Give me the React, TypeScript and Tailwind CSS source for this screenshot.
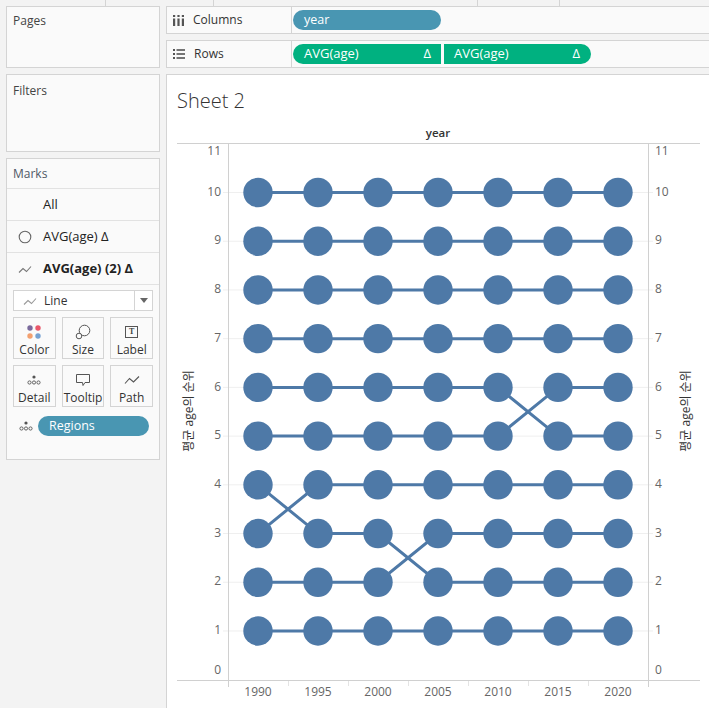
import React from "react";

const FONT = { fontFamily: '"Open Sans", "Noto Sans CJK KR", sans-serif' };

const YEARS = [1990, 1995, 2000, 2005, 2010, 2015, 2020];
const SERIES = [
  [10, 10, 10, 10, 10, 10, 10],
  [9, 9, 9, 9, 9, 9, 9],
  [8, 8, 8, 8, 8, 8, 8],
  [7, 7, 7, 7, 7, 7, 7],
  [6, 6, 6, 6, 6, 5, 5],
  [5, 5, 5, 5, 5, 6, 6],
  [3, 4, 4, 4, 4, 4, 4],
  [4, 3, 3, 2, 2, 2, 2],
  [2, 2, 2, 3, 3, 3, 3],
  [1, 1, 1, 1, 1, 1, 1],
];

const xOf = (i: number) => 258 + i * 60;
const yOf = (v: number) => 678.7 - v * 48.72;

function DetailIcon() {
  return (
    <svg width="14" height="10" viewBox="0 0 14 10">
      <circle cx="7" cy="2" r="1.6" fill="#555" />
      <circle cx="2.5" cy="7.5" r="1.6" fill="none" stroke="#555" strokeWidth="0.9" />
      <circle cx="7" cy="7.5" r="1.6" fill="none" stroke="#555" strokeWidth="0.9" />
      <circle cx="11.5" cy="7.5" r="1.6" fill="none" stroke="#555" strokeWidth="0.9" />
    </svg>
  );
}

function LineIcon({ color = "#777" }: { color?: string }) {
  return (
    <svg width="14" height="10" viewBox="0 0 14 10">
      <polyline points="1,8.5 5,4.5 8.5,7.5 13,2.5" fill="none" stroke={color} strokeWidth="1.1" />
    </svg>
  );
}

function MarkButton({ label, icon }: { label: string; icon: React.ReactNode }) {
  return (
    <div className="h-[42px] bg-[#fafafa] border border-[#d4d4d4] flex flex-col items-center">
      <div className="h-[24px] flex items-center justify-center pt-[3px]">{icon}</div>
      <div className="text-[12px] leading-[16px] text-[#333]">{label}</div>
    </div>
  );
}

function Chart() {
  const ticks = [0, 1, 2, 3, 4, 5, 6, 7, 8, 9, 10, 11];
  const labelY = (v: number) => (v === 11 ? 151 : v === 0 ? 670 : yOf(v));
  return (
    <svg width="542" height="594" viewBox="167 114 542 594" className="block" style={FONT}>
      {/* gridlines */}
      {ticks.slice(1, 11).map((v) => (
        <line key={v} x1="223" x2="653" y1={yOf(v)} y2={yOf(v)} stroke="#efefef" strokeWidth="1" />
      ))}
      <text x="438" y="136" textAnchor="middle" fontSize="11.5" fontWeight="600" fill="#333">
        year
      </text>
      <line x1="177" x2="700" y1="142.5" y2="142.5" stroke="#d0d0d0" />
      <line x1="177" x2="700" y1="679.5" y2="679.5" stroke="#d0d0d0" />
      <line x1="228.5" x2="228.5" y1="142.5" y2="686" stroke="#d0d0d0" />
      <line x1="648.5" x2="648.5" y1="142.5" y2="686" stroke="#d0d0d0" />
      {[288, 348, 408, 468, 528, 588].map((x) => (
        <line key={x} x1={x + 0.5} x2={x + 0.5} y1="680" y2="685" stroke="#e4e4e4" />
      ))}
      {ticks.map((v) => (
        <g key={v}>
          <text x="221" y={labelY(v)} textAnchor="end" dominantBaseline="middle" fontSize="12" fill="#666">
            {v}
          </text>
          <text x="655" y={labelY(v)} textAnchor="start" dominantBaseline="middle" fontSize="12" fill="#666">
            {v}
          </text>
        </g>
      ))}
      {YEARS.map((yr, i) => (
        <text key={yr} x={xOf(i)} y="692" textAnchor="middle" dominantBaseline="middle" fontSize="12" fill="#666">
          {yr}
        </text>
      ))}
      <text
        x="190"
        y="410"
        transform="rotate(-90 190 410)"
        textAnchor="middle"
        dominantBaseline="middle"
        fontSize="12"
        fill="#333"
      >
        평균 age의 순위
      </text>
      <text
        x="687"
        y="410"
        transform="rotate(-90 687 410)"
        textAnchor="middle"
        dominantBaseline="middle"
        fontSize="12"
        fill="#333"
      >
        평균 age의 순위
      </text>
      {SERIES.map((s, k) => (
        <polyline
          key={k}
          points={s.map((v, i) => `${xOf(i)},${yOf(v)}`).join(" ")}
          fill="none"
          stroke="#4e79a7"
          strokeWidth="3"
        />
      ))}
      {SERIES.map((s, k) =>
        s.map((v, i) => <circle key={`${k}-${i}`} cx={xOf(i)} cy={yOf(v)} r="14.7" fill="#4e79a7" />)
      )}
    </svg>
  );
}

export default function App() {
  return (
    <div className="w-[709px] h-[708px] bg-[#f3f3f3] flex overflow-hidden text-[#333]" style={FONT}>
      {/* Left side cards */}
      <div className="w-[166px] flex flex-col shrink-0">
        <div className="h-[6px] w-[106px] border-r border-[#d4d4d4]" />
        <div className="ml-[6px] w-[154px] h-[62px] bg-[#fafafa] border border-[#d4d4d4] px-[6px] pt-[5px] text-[12px] text-[#444]">
          Pages
        </div>
        <div className="ml-[6px] mt-[6px] w-[154px] h-[78px] bg-[#fafafa] border border-[#d4d4d4] px-[6px] pt-[7px] text-[12px] text-[#444]">
          Filters
        </div>
        <div className="ml-[6px] mt-[6px] w-[154px] h-[302px] bg-[#fafafa] border border-[#d4d4d4] flex flex-col text-[13px]">
          <div className="h-[30px] border-b border-[#e2e2e2] px-[6px] flex items-center text-[12px] text-[#4f5866]">Marks</div>
          <div className="h-[32px] border-b border-[#e2e2e2] flex items-center pl-[36px] text-[#222]">All</div>
          <div className="h-[32px] border-b border-[#e2e2e2] flex items-center">
            <div className="w-[36px] flex justify-center">
              <svg width="14" height="14" viewBox="0 0 14 14">
                <circle cx="7" cy="7" r="5.8" fill="none" stroke="#666" strokeWidth="1.1" />
              </svg>
            </div>
            <span className="text-[#222]">AVG(age) Δ</span>
          </div>
          <div className="h-[32px] border-b border-[#e2e2e2] flex items-center">
            <div className="w-[36px] flex justify-center">
              <LineIcon />
            </div>
            <span className="font-bold text-[#222]">AVG(age) (2) Δ</span>
          </div>
          <div className="px-[6px] pt-[5px] flex flex-col gap-[6px]">
            <div className="h-[21px] bg-white border border-[#d4d4d4] flex items-center">
              <div className="flex-1 flex items-center gap-[7px] pl-[9px] text-[#333]">
                <LineIcon color="#999" />
                <span className="text-[12px]">Line</span>
              </div>
              <div className="w-[18px] h-full border-l border-[#d4d4d4] flex items-center justify-center">
                <svg width="8" height="5" viewBox="0 0 8 5">
                  <polygon points="0,0 8,0 4,5" fill="#666" />
                </svg>
              </div>
            </div>
            <div className="grid grid-cols-3 gap-x-[6px] gap-y-[6px]">
              <MarkButton
                label="Color"
                icon={
                  <svg width="14" height="14" viewBox="0 0 14 14">
                    <circle cx="3" cy="3" r="2.7" fill="#7a6a9c" />
                    <circle cx="11" cy="3" r="2.7" fill="#e9576a" />
                    <circle cx="3" cy="11" r="2.7" fill="#f3a06f" />
                    <circle cx="11" cy="11" r="2.7" fill="#76a2d2" />
                  </svg>
                }
              />
              <MarkButton
                label="Size"
                icon={
                  <svg width="16" height="16" viewBox="0 0 16 16">
                    <circle cx="9.5" cy="6.5" r="5.3" fill="none" stroke="#555" strokeWidth="1" />
                    <circle cx="4" cy="12" r="2.8" fill="#fafafa" stroke="#555" strokeWidth="1" />
                  </svg>
                }
              />
              <MarkButton
                label="Label"
                icon={
                  <div className="w-[13px] h-[12px] border border-[#555] flex items-center justify-center text-[8px] leading-none font-bold text-[#444]" style={{ fontFamily: '"Liberation Serif", serif' }}>
                    T
                  </div>
                }
              />
              <MarkButton label="Detail" icon={<DetailIcon />} />
              <MarkButton
                label="Tooltip"
                icon={
                  <svg width="16" height="14" viewBox="0 0 16 14">
                    <path d="M1.5 1.5 H14.5 V9.5 H10 L8 12.5 L7.5 9.5 H1.5 Z" fill="none" stroke="#555" strokeWidth="1" />
                  </svg>
                }
              />
              <MarkButton
                label="Path"
                icon={
                  <svg width="16" height="12" viewBox="0 0 16 12">
                    <polyline points="1,9.5 5.5,4.5 9.5,8 15,2.5" fill="none" stroke="#555" strokeWidth="1.1" />
                  </svg>
                }
              />
            </div>
            <div className="flex items-center mt-[3px]">
              <div className="w-[25px] flex justify-center">
                <DetailIcon />
              </div>
              <div className="w-[111px] h-[20px] rounded-full bg-[#4996b2] text-white text-[12.5px] flex items-center pl-[11px]">
                Regions
              </div>
            </div>
          </div>
        </div>
      </div>

      {/* Right side: shelves + sheet */}
      <div className="flex-1 flex flex-col min-w-0">
        <div className="h-[6px] flex shrink-0">
          <div className="w-[48px] border-r border-[#d4d4d4]" />
          <div className="w-[264px] border-r border-[#d4d4d4]" />
          <div className="w-[82px] border-r border-[#d4d4d4]" />
        </div>
        <div className="h-[28px] border-y border-l border-[#d4d4d4] bg-[#fafafa] flex shrink-0">
          <div className="w-[125px] border-r border-[#d4d4d4] flex items-center pl-[6px] gap-[9px] text-[12px] text-[#333]">
            <svg width="11" height="11" viewBox="0 0 11 11">
              <rect x="0" y="0" width="2.2" height="2" fill="#555" />
              <rect x="4.4" y="0" width="2.2" height="2" fill="#555" />
              <rect x="8.8" y="0" width="2.2" height="2" fill="#555" />
              <rect x="0" y="3.5" width="2.2" height="7.5" fill="#555" />
              <rect x="4.4" y="3.5" width="2.2" height="7.5" fill="#555" />
              <rect x="8.8" y="3.5" width="2.2" height="7.5" fill="#555" />
            </svg>
            <span>Columns</span>
          </div>
          <div className="flex items-center pl-[1px]">
            <div className="w-[148px] h-[20px] rounded-full bg-[#4996b2] text-white text-[12.5px] flex items-center pl-[11px]">
              year
            </div>
          </div>
        </div>
        <div className="h-[28px] mt-[6px] border-y border-l border-[#d4d4d4] bg-[#fafafa] flex shrink-0">
          <div className="w-[125px] border-r border-[#d4d4d4] flex items-center pl-[6px] gap-[9px] text-[12px] text-[#333]">
            <svg width="12" height="10" viewBox="0 0 12 10">
              <rect x="0" y="0" width="2" height="2" fill="#555" />
              <rect x="3.5" y="0.2" width="8.5" height="1.6" fill="#555" />
              <rect x="0" y="4" width="2" height="2" fill="#555" />
              <rect x="3.5" y="4.2" width="8.5" height="1.6" fill="#555" />
              <rect x="0" y="8" width="2" height="2" fill="#555" />
              <rect x="3.5" y="8.2" width="8.5" height="1.6" fill="#555" />
            </svg>
            <span>Rows</span>
          </div>
          <div className="flex items-center pl-[1px] gap-[3px]">
            <div className="w-[148px] h-[20px] rounded-l-full rounded-r-[2px] bg-[#00b180] text-white text-[13px] flex items-center justify-between pl-[11px] pr-[10px]">
              <span>AVG(age)</span>
              <span>Δ</span>
            </div>
            <div className="w-[147px] h-[20px] rounded-r-full rounded-l-[2px] bg-[#00b180] text-white text-[13px] flex items-center justify-between pl-[10px] pr-[11px]">
              <span>AVG(age)</span>
              <span>Δ</span>
            </div>
          </div>
        </div>
        <div className="mt-[6px] flex-1 bg-white border-t border-l border-[#d4d4d4] flex flex-col">
          <div className="h-[40px] pt-[12px] pl-[10px] text-[20px] leading-[27px] font-light text-[#333] shrink-0">
            Sheet 2
          </div>
          <Chart />
        </div>
      </div>
    </div>
  );
}
